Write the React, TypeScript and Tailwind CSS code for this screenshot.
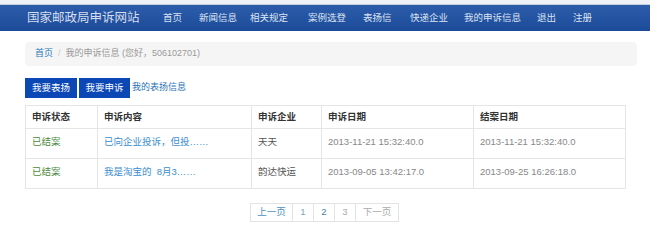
const navItems = [
  { label: "首页", w: "w-[36px]" },
  { label: "新闻信息", w: "w-[51px]" },
  { label: "相关规定", w: "w-[58px]" },
  { label: "案例选登", w: "w-[55px]" },
  { label: "表扬信", w: "w-[47px]" },
  { label: "快递企业", w: "w-[54px]" },
  { label: "我的申诉信息", w: "w-[73px]" },
  { label: "退出", w: "w-[36px]" },
  { label: "注册", w: "w-[36px]" },
];

const rows = [
  {
    status: "已结案",
    content: "已向企业投诉，但投……",
    company: "天天",
    filed: "2013-11-21 15:32:40.0",
    closed: "2013-11-21 15:32:40.0",
  },
  {
    status: "已结案",
    content: "我是淘宝的  8月3……",
    company: "韵达快运",
    filed: "2013-09-05 13:42:17.0",
    closed: "2013-09-25 16:26:18.0",
  },
];

const font = { fontFamily: '"Liberation Sans", "Noto Sans CJK SC", sans-serif' };

const NavBar = () => (
  <div>
    <div className="h-[5px] border-b border-[#c3cde0] bg-[#eef1f6]" />
    <div className="flex h-[26px] items-center bg-gradient-to-b from-[#2c5caa] to-[#1c4b9a] pl-[27px]">
      <span className="w-[136px] text-[12.5px] text-[#d6deee]">国家邮政局申诉网站</span>
      <div className="flex text-[9.5px] text-[#dce3f1]">
        {navItems.map((n) => (
          <span key={n.label} className={`${n.w} whitespace-nowrap`}>
            {n.label}
          </span>
        ))}
      </div>
    </div>
  </div>
);

const Pager = () => (
  <div className="mt-[14px] flex pl-[225px]">
    <div className="flex h-[19px] text-[9.5px]">
      <span className="flex w-[43px] items-center justify-center border border-[#e3e3e3] text-[#4a90c0]">上一页</span>
      <span className="flex w-[21px] items-center justify-center border border-l-0 border-[#e3e3e3] text-[#7fa3c0]">1</span>
      <span className="flex w-[21px] items-center justify-center border border-l-0 border-[#e3e3e3] text-[#4a7fa8]">2</span>
      <span className="flex w-[21px] items-center justify-center border border-l-0 border-[#e3e3e3] text-[#aaa]">3</span>
      <span className="flex w-[43px] items-center justify-center border border-l-0 border-[#e3e3e3] text-[#aaa]">下一页</span>
    </div>
  </div>
);

const App = () => {
  return (
    <div className="h-[240px] w-[650px] overflow-hidden bg-white" style={font}>
      <NavBar />
      <div className="pl-[25px]">
        <div className="mt-[11px] flex h-[24px] w-[612px] items-center rounded-sm bg-[#f5f5f5] px-[10px] text-[9px] text-[#999]">
          <span className="text-[#2a7ab8]">首页</span>
          <span className="mx-[5px] text-[#ccc]">/</span>
          <span>我的申诉信息 (您好，506102701)</span>
        </div>
        <div className="mt-[12px] flex items-center gap-[2px] text-[9.5px]">
          <span className="flex h-[20px] w-[52px] items-center justify-center bg-[#0b47b5] text-white">我要表扬</span>
          <span className="flex h-[20px] w-[51px] items-center justify-center bg-[#0b47b5] text-white">我要申诉</span>
          <span className="text-[9px] text-[#1f73b7]">我的表扬信息</span>
        </div>
        <table className="mt-[7px] w-[601px] table-fixed border-collapse text-[9.5px]">
          <thead>
            <tr className="h-[23px] text-left font-bold text-[#333]">
              <th className="w-[72px] border border-[#e5e5e5] px-[6px]">申诉状态</th>
              <th className="w-[154px] border border-[#e5e5e5] px-[6px]">申诉内容</th>
              <th className="w-[70px] border border-[#e5e5e5] px-[6px]">申诉企业</th>
              <th className="w-[152px] border border-[#e5e5e5] px-[6px]">申诉日期</th>
              <th className="border border-[#e5e5e5] px-[6px]">结案日期</th>
            </tr>
          </thead>
          <tbody>
            {rows.map((r) => (
              <tr key={r.filed} className="h-[30px]">
                <td className="border border-[#e5e5e5] px-[6px] pb-[2px] text-[#4d8a3c]">{r.status}</td>
                <td className="border border-[#e5e5e5] px-[6px] pb-[2px] whitespace-pre text-[#3b8ed0]">{r.content}</td>
                <td className="border border-[#e5e5e5] px-[6px] pb-[2px] text-[#555]">{r.company}</td>
                <td className="border border-[#e5e5e5] px-[6px] pb-[2px] text-[#888]">{r.filed}</td>
                <td className="border border-[#e5e5e5] px-[6px] pb-[2px] text-[#888]">{r.closed}</td>
              </tr>
            ))}
          </tbody>
        </table>
        <Pager />
      </div>
    </div>
  );
};

export default App;
